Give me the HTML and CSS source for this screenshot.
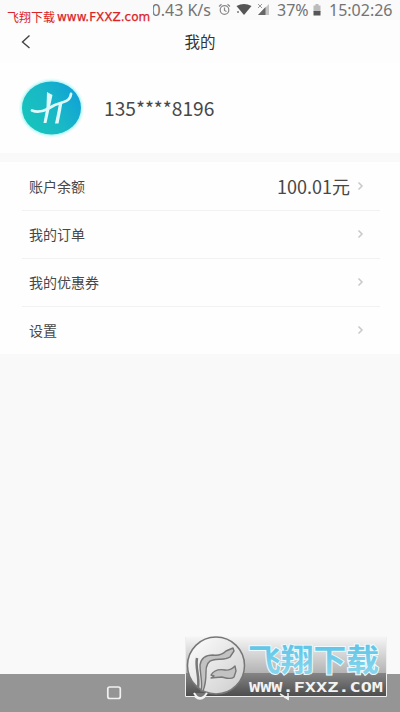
FILE: index.html
```html
<!DOCTYPE html>
<html lang="zh-CN">
<head>
<meta charset="utf-8">
<title>我的</title>
<link rel="stylesheet" href="styles.css">
</head>
<body>
<div class="screen">
  <div class="status">
    <span class="speed">0.43 K/s</span>
    <svg class="sys-icons" width="60" height="20" viewBox="0 0 60 20">
      <g fill="none" stroke="#888" stroke-width="1.200"><circle cx="8.500" cy="10" r="4.300"/><path d="M8.500 7.500v3l2 1M3 6.500l2.500-2.300M14 6.500l-2.500-2.300"/></g>
      <path d="M20.500 6q7.500-4 15 0l-7.500 9z" fill="#555"/>
      <path d="M21 11h2v2h-2z" fill="#999"/>
      <path d="M53 4v11H42z" fill="#c4c4c4"/><path d="M49.500 7v8H42z" fill="#666"/>
      <path d="M42 4l4 4m0-4l-4 4" stroke="#999"/>
    </svg>
    <span class="percent">37%</span>
    <svg class="battery" width="8" height="13" viewBox="0 0 8 13"><path d="M2.500 0h3v1.500H7.500V8h-7V1.500h2z" fill="#bbb"/><path d="M.5 7h7v4.500h-7z" fill="#555"/></svg>
    <span class="clock">15:02:26</span>
  </div>
  <div class="site-tag"><span class="site-cn">飞翔下载</span><span class="site-url">www.FXXZ.com</span></div>
  <header class="nav">
    <svg class="back" width="12" height="16" viewBox="0 0 12 16"><path d="M9.500 1.500L2.500 8l7 6" fill="none" stroke="#444" stroke-width="1.400"/></svg>
    <h1>我的</h1>
  </header>
  <section class="profile">
    <svg class="avatar" width="68" height="62" viewBox="0 0 68 62">
      <defs><linearGradient id="av" x1="0" y1=".8" x2="1" y2=".2"><stop offset="0" stop-color="#16c5ba"/><stop offset=".5" stop-color="#19b8c6"/><stop offset="1" stop-color="#0fa0d8"/></linearGradient></defs>
      <ellipse cx="34.500" cy="31" rx="32.500" ry="29.500" fill="#e9fdfd"/>
      <ellipse cx="34.500" cy="31" rx="31" ry="28" fill="#c2f7f7"/>
      <ellipse cx="34.500" cy="31" rx="29.500" ry="26.500" fill="url(#av)"/>
      <path d="M15 33.500q7 3 15.500-1.500 8-5 16-7 7-2 7.500-8" fill="none" stroke="#dff9fa" stroke-width="2.800" stroke-linecap="round"/>
      <path d="M30 15l5.500 3-3 14-3 14h-3l3-16zM42 26l3.500-1-1.500 9-2.500 12.500h-3.500l2.500-12z" fill="#dff9fa"/>
    </svg>
    <span class="phone">135****8196</span>
  </section>
  <main class="menu">
    <div class="row"><span class="label">账户余额</span><span class="amount">100.01元</span><svg class="chev" width="8" height="10" viewBox="0 0 8 10"><path d="M1.500 1.500L5 5 1.500 8.500" /></svg></div>
    <div class="row"><span class="label">我的订单</span><svg class="chev" width="8" height="10" viewBox="0 0 8 10"><path d="M1.500 1.500L5 5 1.500 8.500" /></svg></div>
    <div class="row"><span class="label">我的优惠券</span><svg class="chev" width="8" height="10" viewBox="0 0 8 10"><path d="M1.500 1.500L5 5 1.500 8.500" /></svg></div>
    <div class="row"><span class="label">设置</span><svg class="chev" width="8" height="10" viewBox="0 0 8 10"><path d="M1.500 1.500L5 5 1.500 8.500" /></svg></div>
  </main>
  <footer class="sysbar">
    <svg width="400" height="38" viewBox="0 0 400 38"><g fill="none" stroke="#f1f1f1" stroke-width="1.700"><rect x="107.800" y="13" width="12.500" height="11.500" rx="2"/><circle cx="200" cy="19" r="6"/><path d="M288 13v12l-9-6z"/></g></svg>
  </footer>
  <svg class="watermark" width="204" height="66" viewBox="0 0 204 66">
    <defs>
      <linearGradient id="wm" x1="0" y1="0" x2="0" y2="1"><stop offset="0" stop-color="#f6f6f6"/><stop offset=".6" stop-color="#b4b4b4"/><stop offset=".61" stop-color="#858585"/><stop offset="1" stop-color="#4c4c4c"/></linearGradient>
      <linearGradient id="disc" x1="0" y1="0" x2="1" y2="1"><stop offset="0" stop-color="#fff"/><stop offset="1" stop-color="#ccc"/></linearGradient>
      <linearGradient id="blue" x1="0" y1="0" x2="0" y2="1"><stop offset="0" stop-color="#52bfe4"/><stop offset="1" stop-color="#91d9ee"/></linearGradient>
    </defs>
    <rect x="1.500" y="1.500" width="201" height="60" fill="url(#wm)"/>
    <path d="M1.500 2v59.500h201V2" fill="none" stroke="#eee"/>
    <circle cx="32" cy="30.500" r="28.500" fill="url(#disc)" stroke="#777" stroke-width="1.500"/>
    <g fill="#c2c2c2" stroke="#777" stroke-width="1.400" stroke-linejoin="round">
      <path d="M17 56c2-8-1-16-1-26 1-7 6-10 13-10 7 1 10-1 13-4l7-3 1 3-4 6c-6 4-11 1-17 3-6 1-7 6-7 12 0 8-1 14-3 19z"/>
      <path d="M27 40c3-5 8-6 14-5 5 1 8-2 10-4l1 5-2 6c-3 3-8 1-12 0-5 0-7 1-11 1l3-2z"/>
      <path d="M13 23c-2 10 3 19 1 30" fill="none" stroke-width="2.500"/>
    </g>
    <path d="M10 58q6 10 13 0" fill="#777" stroke="#f3f3f3" stroke-width="2"/>
    <text class="wm-cn" x="64" y="36" textLength="131" lengthAdjust="spacingAndGlyphs">飞翔下载</text>
    <text class="wm-url" x="65" y="57" textLength="134" lengthAdjust="spacingAndGlyphs">WWW.FXXZ.COM</text>
    <path d="M96 59l8 5v-6" fill="none" stroke="#eee" stroke-width="1.500"/>
  </svg>
</div>
</body>
</html>
```

FILE: styles.css
```css
* { box-sizing: border-box; }
body { margin: 0; font-family: "Noto Sans CJK SC", sans-serif; color: #484848; }
svg { display: block; flex: none; }
.screen { position: relative; width: 400px; height: 712px; overflow: hidden; background: #f9f9f9; display: flex; flex-direction: column; }
.status { height: 20px; flex: none; display: flex; align-items: center; padding-left: 153px; background: #fafafa; font: 16px/20px "Noto Sans", sans-serif; color: #737373; white-space: nowrap; }
.speed { width: 58px; display: flex; justify-content: flex-end; overflow: hidden; }
.sys-icons { margin-left: 5px; }
.percent { width: 32px; margin-left: 1px; }
.battery { margin-left: 4px; }
.clock { margin-left: 8px; }
.site-tag { position: absolute; left: 7px; top: 8px; height: 18px; display: flex; align-items: center; color: #dc2328; white-space: nowrap; }
.site-cn { width: 50px; font-size: 12px; line-height: 18px; font-weight: 400; }
.site-url { font: 12px/18px "DejaVu Sans", sans-serif; -webkit-text-stroke: .25px #dc2328; }
.nav { height: 43px; flex: none; background: #fdfdfd; display: flex; align-items: center; padding-left: 20px; }
.back { margin-top: 1px; }
.nav h1 { margin: 0 32px 2px 0; flex: 1; text-align: center; font-size: 15.500px; line-height: 24px; font-weight: 400; color: #333; }
.profile { height: 90px; flex: none; background: #fefefe; display: flex; align-items: center; padding-left: 17px; }
.avatar { margin-top: -1px; }
.phone { margin-left: 19px; font-size: 19.200px; line-height: 28px; }
.menu { height: 192px; flex: none; margin-top: 9px; padding: 0 20px 0 22px; background: #fefefe; }
.row { height: 48px; display: flex; align-items: center; padding: 0 15px 2px 7px; border-bottom: 1px solid #f1f1f1; }
.row:first-child { height: 49px; padding-bottom: 0; }
.row:last-child { height: 47px; border-bottom: 0; }
.label { flex: 1; font-size: 14px; line-height: 22px; }
.amount { font-size: 18px; line-height: 26px; margin-right: 7px; }
.chev path { fill: none; stroke: #c8c8c8; stroke-width: 1.500; }
.sysbar { margin-top: auto; height: 38px; background: #959595; }
.watermark { position: absolute; left: 184px; top: 635px; }
.wm-cn { font: 700 31px "Noto Sans CJK SC", sans-serif; fill: url(#blue); stroke: #eefaff; stroke-width: 2px; paint-order: stroke; }
.wm-url { font: bold 14px "DejaVu Sans Mono", monospace; fill: #f2f2f2; }
```
